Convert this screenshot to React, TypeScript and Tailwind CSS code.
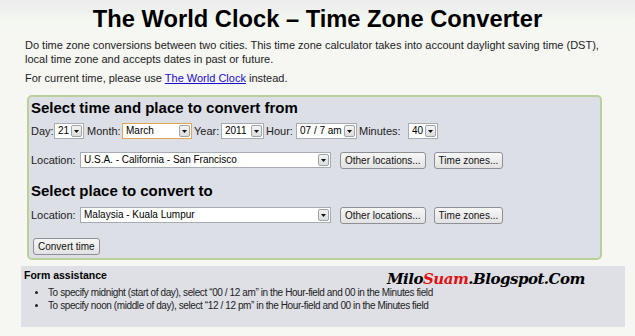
import React from 'react';

interface SelectBoxProps {
  value: string;
  width: string;
  focused?: boolean;
}

// mock of a classic windows dropdown
const SelectBox: React.FC<SelectBoxProps> = ({ value, width, focused }) => {
  const frame = focused ? 'border-[#e3a54f]' : 'border-[#a7abb3]';
  return (
    <div className={`inline-flex h-[16px] items-stretch bg-white border ${frame} ${width}`}>
      <span className="flex-1 pl-[3px] leading-[14px] text-[10px] text-black whitespace-nowrap overflow-hidden">{value}</span>
      <span className="m-[1px] w-[11px] flex items-center justify-center rounded-[2px] border border-[#9ea3aa] bg-[linear-gradient(to_bottom,#f4f4f4,#dcdcdc)]">
        <svg width="5" height="3" viewBox="0 0 5 3">
          <path d="M0 0h5L2.5 3z" fill="#111" />
        </svg>
      </span>
    </div>
  );
};

const Btn: React.FC<{ label: string }> = ({ label }) => (
  <span className="inline-flex h-[17px] items-center px-[4px] rounded-[3px] border border-[#8d9096] bg-[linear-gradient(to_bottom,#f7f7f7,#e2e2e2)] text-[10px] text-[#111] whitespace-nowrap">
    {label}
  </span>
);

const LocationRow: React.FC<{ value: string }> = ({ value }) => (
  <div className="flex items-center">
    <span className="w-[49px]">Location:</span>
    <SelectBox value={value} width="w-[251px]" />
    <span className="ml-[9px]"><Btn label="Other locations..." /></span>
    <span className="ml-[8px]"><Btn label="Time zones..." /></span>
  </div>
);

const App: React.FC = () => {
  return (
    <div className="relative h-[336px] w-[635px] overflow-hidden bg-[linear-gradient(to_bottom,#ececee_0px,#eff1ee_12px,#f4f8f0_20px,#f6f6f3_40px)] font-['Liberation_Sans',Arial,sans-serif] text-[#1c1c1c]">
      <h1 className="pt-[4px] text-center text-[23.7px] font-bold leading-[30px] text-black">
        The World Clock – Time Zone Converter
      </h1>

      <p className="mt-[4px] ml-[25px] mr-[20px] text-[11px] leading-[14px]">
        Do time zone conversions between two cities. This time zone calculator takes into account daylight saving time (DST), local time zone and accepts dates in past or future.
      </p>
      <p className="mt-[5px] ml-[25px] text-[11px] leading-[14px]">
        For current time, please use <a className="text-[#1a0dcc] underline">The World Clock</a> instead.
      </p>

      <div className="mt-[10px] ml-[27px] w-[575px] h-[165px] rounded-[5px] border-2 border-[#b9d198] bg-[#dcdfe6] px-[2px] pt-[2px] text-[11px]">
        <h2 className="text-[15px] font-bold leading-[18px] text-black">Select time and place to convert from</h2>

        <div className="mt-[6px] flex items-center">
          <span className="w-[23px]">Day:</span>
          <SelectBox value="21" width="w-[30px]" />
          <span className="ml-[3px] w-[35px]">Month:</span>
          <SelectBox value="March" width="w-[70px]" focused />
          <span className="ml-[2px] w-[27px]">Year:</span>
          <SelectBox value="2011" width="w-[43px]" />
          <span className="ml-[2px] w-[30px]">Hour:</span>
          <SelectBox value="07 / 7 am" width="w-[61px]" />
          <span className="ml-[2px] w-[49px]">Minutes:</span>
          <SelectBox value="40" width="w-[30px]" />
        </div>

        <div className="mt-[12px]">
          <LocationRow value="U.S.A. - California - San Francisco" />
        </div>

        <h2 className="mt-[13px] text-[15px] font-bold leading-[18px] text-black">Select place to convert to</h2>

        <div className="mt-[7px]">
          <LocationRow value="Malaysia - Kuala Lumpur" />
        </div>

        <div className="mt-[14px] ml-[2px]">
          <Btn label="Convert time" />
        </div>
      </div>

      <div className="relative mt-[6px] ml-[21px] w-[604px] h-[61px] bg-[#dee0e6] px-[3px] pt-[3px]">
        <h3 className="text-[10.5px] font-bold leading-[13px] text-black">Form assistance</h3>
        <ul className="mt-[4px] ml-[16px] list-disc pl-[8px] text-[10px] tracking-[-0.4px] leading-[13px] text-[#222]">
          <li>To specify midnight (start of day), select “00 / 12 am” in the Hour-field and 00 in the Minutes field</li>
          <li>To specify noon (middle of day), select “12 / 12 pm” in the Hour-field and 00 in the Minutes field</li>
        </ul>
        <div className="absolute left-[366px] top-[2px] font-['DejaVu_Serif',serif] italic font-bold text-[15px] tracking-[-0.5px] text-black">
          Milo<span className="text-[#e01010]">Suam</span>.Blogspot.Com
        </div>
      </div>
    </div>
  );
};

export default App;
